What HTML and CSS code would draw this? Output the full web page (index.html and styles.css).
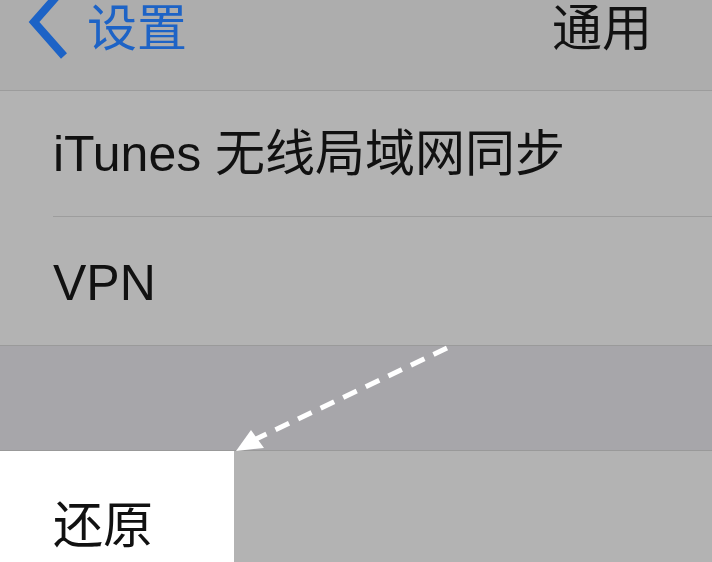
FILE: index.html
```html
<!DOCTYPE html>
<html lang="zh-CN">
<head>
  <meta charset="UTF-8">
  <title>通用</title>
  <link rel="stylesheet" href="styles.css">
</head>
<body>

  <!-- Nav bar -->
  <div class="navbar">
    <div class="back">
      <svg class="chevron" width="44" height="64" viewBox="0 0 44 64">
        <polyline points="36,-8 6,26 36,60" fill="none" stroke="#1d63c6" stroke-width="8" stroke-linejoin="miter"/>
      </svg>
      <span class="back-label">设置</span>
    </div>
    <div class="nav-title">通用</div>
  </div>

  <!-- Group -->
  <div class="group">
    <div class="cell cell-inset">iTunes 无线局域网同步</div>
    <div class="cell cell-tall">VPN</div>
  </div>

  <div class="spacer"></div>

  <div class="group">
    <div class="cell cell-reset">
      <div class="reset-label">还原</div>
    </div>
  </div>

  <!-- Pointer arrow -->
  <svg class="pointer" width="712" height="562" viewBox="0 0 712 562">
    <line x1="447" y1="348" x2="252" y2="441" stroke="#fff" stroke-width="5" stroke-dasharray="15 10"/>
    <polygon points="236,451 251,430 264,448" fill="#fff"/>
  </svg>

</body>
</html>
```

FILE: styles.css
```css
body {
  margin: 0;
  height: 562px;
  overflow: hidden;
  position: relative;
  background-color: #a7a6aa;
  font-family: "Liberation Sans", "Noto Sans CJK SC", sans-serif;
  color: #111;
}

.navbar {
  height: 90px;
  background-color: #adadad;
  border-bottom: 1px solid #9c9c9c;
  display: flex;
  align-items: flex-start;
  justify-content: space-between;
}

.back {
  display: flex;
  align-items: flex-start;
  color: #1d63c6;
}

.chevron {
  margin-left: 28px;
  margin-top: -4px;
}

.back-label {
  font-size: 50px;
  line-height: 1;
  margin-left: 15px;
  margin-top: 4px;
}

.nav-title {
  font-size: 50px;
  line-height: 1;
  margin-top: 4px;
  margin-right: 60px;
}

.group {
  background-color: #b3b3b3;
}

.cell {
  display: flex;
  align-items: center;
  padding-left: 53px;
  font-size: 50px;
  line-height: 1;
}

.cell-inset {
  height: 125px;
  border-bottom: 1px solid #9d9d9d;
  margin-left: 53px;
  padding-left: 0;
}

.cell-tall {
  height: 129px;
  padding-top: 4px;
  box-sizing: border-box;
  border-bottom: 1px solid #9a9a9a;
}

.spacer {
  height: 104px;
  border-bottom: 1px solid #999;
}

.cell-reset {
  height: 130px;
  padding-left: 0;
  align-items: stretch;
}

.reset-label {
  width: 234px;
  background-color: #fff;
  padding-left: 53px;
  box-sizing: border-box;
  display: flex;
  align-items: center;
  padding-top: 20px;
}

.pointer {
  position: absolute;
  top: 0;
  left: 0;
}
```
